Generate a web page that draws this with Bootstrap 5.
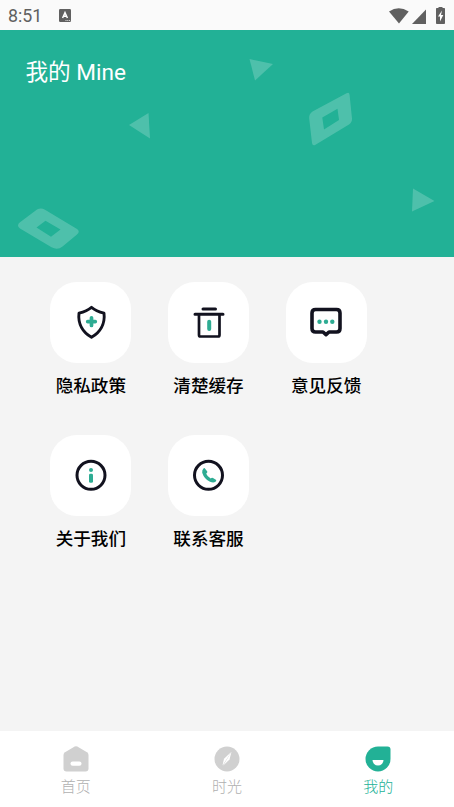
<!DOCTYPE html>
<html lang="zh-CN">
<head>
<meta charset="utf-8">
<meta name="viewport" content="width=device-width, initial-scale=1">
<title>我的</title>
<link href="https://cdn.jsdelivr.net/npm/bootstrap@5.3.0/dist/css/bootstrap.min.css" rel="stylesheet">
<style>
body{font-family:Roboto,"Noto Sans CJK SC",sans-serif;background:#f4f4f4;color:#000;overflow:hidden}
svg{display:block;flex:none}
.status{height:30px;background:#fafafa;color:#606060;font-size:17.8px;line-height:30px;padding:2px 8px 0}
.hero{height:227px;background:#22b196}
.hero h1{font-size:22.6px;line-height:30px;font-weight:400;margin:0;padding:27.500px 0 0 25.5px;color:#fff}
.menu{width:353px;margin-left:32px;padding-top:25px}
.entry{height:152.6px;color:#000}
.tile{width:81px;height:81px;border-radius:27px;background:#fff;padding-bottom:1px}
.caption{font-size:17.6px;line-height:24px;font-weight:500;margin-top:11px}
.tabs{height:76px;background:#fff}
.tab{color:#b0b0b0;font-size:15px;line-height:20px;font-weight:300;padding-top:14px;text-decoration:none}
.tab.active{color:#22b196}
.tab span{margin-top:4px}
</style>
<script src="https://cdn.jsdelivr.net/npm/bootstrap@5.3.0/dist/js/bootstrap.bundle.min.js"></script>
</head>
<body>
<div class="d-flex flex-column vh-100">
  <div class="status d-flex align-items-center">
    <span>8:51</span>
    <svg class="ms-3" width="14" height="14" viewBox="0 0 14 14"><rect x="1" y="0" width="12" height="13" rx="1.2" fill="#606060"/><path d="M4.600 9 7 3.600 9.400 9M5.500 7.200h3" fill="none" stroke="#fff" stroke-width="1.500"/><path d="M7.500 11.500h5" stroke="#ddd" stroke-width="1" stroke-dasharray="1 .8"/></svg>
    <svg class="ms-auto" width="58" height="18" viewBox="388 6 58 18"><g fill="#606060"><path d="M389 10.500Q398.700 3.800 408.700 10.500L399 22.600Z"/><path d="M426 8.500V23H412Z"/><path d="M438.500 7v-1h4v1h1.700q.8 0 .8.800V22q0 1-.8 1h-7.400q-.8 0-.8-1V7.800q0-.8.800-.8Z"/></g><path d="M442 9.500 438 15.500h2v5l3.300-6.500h-2.300Z" fill="#fff"/></svg>
  </div>
  <header class="hero position-relative">
    <svg class="position-absolute top-0 start-0" width="454" height="227" viewBox="0 30 454 227">
      <g fill="#fff" fill-opacity=".2">
        <path d="M249.500 59 273 64 255 80.500Z"/>
        <path d="M129 125 148.500 113 150 138.500Z"/>
        <path d="M413 188.500 434.500 201 412 211.500Z"/>
        <path fill-rule="evenodd" d="M312.500 111.500 346.500 93.200Q349.300 91.600 349.600 95L352 118.500Q352.300 122.200 349 124.500L315.500 144.800Q312.500 146.400 312 143L309.200 118.500Q308.700 114 312.500 111.500ZM322.300 117.500 337.500 108.700 339 120 324 129.500Z"/>
        <path fill-rule="evenodd" d="M37 209.500Q41 207.200 45 209.700L77 229Q80.500 231.500 77 234.500L62.500 246.500Q57.500 250.500 51.500 247.200L20 228.500Q16 225.500 20 222.300ZM45.500 220.700 36.500 227.500 51 236.700 60.500 229.500Z"/>
      </g>
    </svg>
    <h1 class="position-relative">我的 Mine</h1>
  </header>
  <main class="flex-grow-1">
    <div class="menu row g-0">
      <div class="col-4 entry d-flex flex-column align-items-center">
        <div class="tile d-flex align-items-center justify-content-center">
          <svg width="36" height="36" viewBox="0 0 36 36"><path d="M18.500 3.300Q23 7 31 9.200C32.300 20 27 28.500 18.500 33.300C10 28.500 4.700 20 6 9.200Q14 7 18.500 3.300Z" fill="none" stroke="#12121f" stroke-width="2.900" stroke-linejoin="round"/><path d="M18.500 13.800v7.600M14.700 17.600h7.600" stroke="#2eac93" stroke-width="3.700" stroke-linecap="round"/></svg>
        </div>
        <div class="caption">隐私政策</div>
      </div>
      <div class="col-4 entry d-flex flex-column align-items-center">
        <div class="tile d-flex align-items-center justify-content-center">
          <svg width="36" height="36" viewBox="0 0 36 36"><g fill="none" stroke="#12121f" stroke-width="3" stroke-linecap="round"><path d="M13 5h12.500M5 10.200h28"/><path d="M9 10.500V31q0 1.500 1.500 1.500H28q1.500 0 1.500-1.500V10.500" stroke-width="2.700"/></g><path d="M19.200 17.700v7.300" stroke="#2eac93" stroke-width="4" stroke-linecap="round"/></svg>
        </div>
        <div class="caption">清楚缓存</div>
      </div>
      <div class="col-4 entry d-flex flex-column align-items-center">
        <div class="tile d-flex align-items-center justify-content-center">
          <svg width="36" height="36" viewBox="0 0 36 36"><path d="M7.500 5.500H28.500Q32 5.500 32 9V24.500Q32 28 28.500 28H21L18 30.700 15 28H7.500Q4 28 4 24.500V9Q4 5.500 7.500 5.500Z" fill="none" stroke="#12121f" stroke-width="3.600" stroke-linejoin="round"/><g fill="#2eac93"><circle cx="11.500" cy="17.700" r="2.200"/><circle cx="18" cy="17.700" r="2.200"/><circle cx="24.300" cy="17.700" r="2.200"/></g></svg>
        </div>
        <div class="caption">意见反馈</div>
      </div>
      <div class="col-4 entry d-flex flex-column align-items-center">
        <div class="tile d-flex align-items-center justify-content-center">
          <svg width="36" height="36" viewBox="0 0 36 36"><circle cx="18" cy="18.300" r="14" fill="none" stroke="#12121f" stroke-width="3"/><circle cx="18" cy="13" r="2" fill="#2eac93"/><rect x="16" y="16.800" width="4" height="9" rx="1.400" fill="#2eac93"/></svg>
        </div>
        <div class="caption">关于我们</div>
      </div>
      <div class="col-4 entry d-flex flex-column align-items-center">
        <div class="tile d-flex align-items-center justify-content-center">
          <svg width="36" height="36" viewBox="0 0 36 36"><g transform="translate(.5 .3)"><circle cx="18" cy="18" r="14" fill="none" stroke="#12121f" stroke-width="3"/><path d="M14 10.800 16.800 14.200Q17.200 15 15.700 16.400Q17 19.500 20.200 21.200Q21.500 20 22.500 20.800L25.700 22.800Q26 23.500 25 24.500Q23 26 19.500 24.500Q13.800 22 11.700 15.500Q11.300 12.500 13.200 11Q13.700 10.500 14 10.800Z" fill="#2eac93"/></g></svg>
        </div>
        <div class="caption">联系客服</div>
      </div>
    </div>
  </main>
  <nav class="tabs row g-0">
    <a class="tab col-4 d-flex flex-column align-items-center" href="#">
      <svg width="28" height="28" viewBox="0 0 28 28"><path d="M12.700 1.600Q14 .9 15.300 1.600L25 7.200Q26.500 8.200 26.500 10V23.500Q26.500 26.500 23.500 26.500H4.500Q1.500 26.500 1.500 23.500V10Q1.500 8.200 3 7.200Z" fill="#d0d0d0"/><rect x="8.500" y="16.500" width="11" height="4.300" rx="2.100" fill="#fff"/></svg>
      <span>首页</span>
    </a>
    <a class="tab col-4 d-flex flex-column align-items-center" href="#">
      <svg width="28" height="28" viewBox="0 0 28 28"><circle cx="14" cy="14" r="12.500" fill="#d0d0d0"/><path d="M18.500 6.800 9.500 20.500 11 13.800Z" fill="#fff"/><path d="M18.500 6.800 10 20.800 16.500 14.500Z" fill="#fff"/></svg>
      <span>时光</span>
    </a>
    <a class="tab active col-4 d-flex flex-column align-items-center" href="#">
      <svg width="28" height="28" viewBox="0 0 28 28"><path d="M14 1.500H23.500Q26.500 1.500 26.500 4.500V14A12.500 12.500 0 1 1 14 1.500Z" fill="#22b196"/><path d="M8.500 15H19.500A5.500 5.500 0 0 1 8.500 15Z" fill="#fff"/></svg>
      <span>我的</span>
    </a>
  </nav>
</div>
</body>
</html>
